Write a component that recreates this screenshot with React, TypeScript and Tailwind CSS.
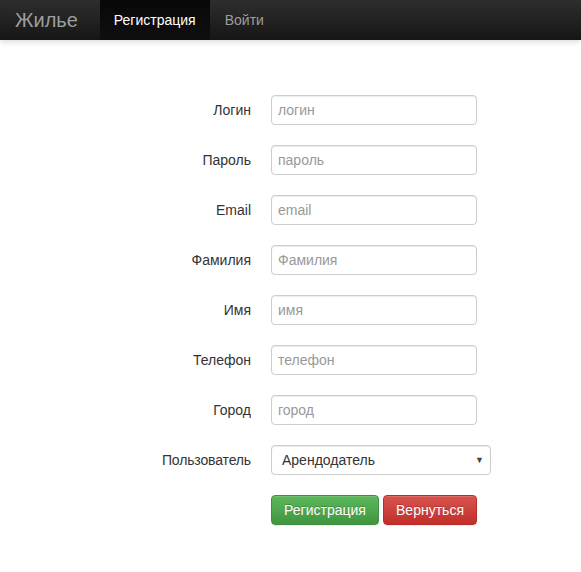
import React from "react";

const fields = [
  { label: "Логин", placeholder: "логин" },
  { label: "Пароль", placeholder: "пароль" },
  { label: "Email", placeholder: "email" },
  { label: "Фамилия", placeholder: "Фамилия" },
  { label: "Имя", placeholder: "имя" },
  { label: "Телефон", placeholder: "телефон" },
  { label: "Город", placeholder: "город" },
];

export default function App() {
  return (
    <div
      className="min-h-[572px] bg-white text-[14px] text-[#333]"
      style={{ fontFamily: '"Liberation Sans", Arial, sans-serif' }}
    >
      {/* Навбар */}
      <nav className="flex h-10 items-stretch bg-gradient-to-b from-[#2e2e2e] to-[#161616] shadow-[0_2px_6px_rgba(0,0,0,0.15)]">
        <div className="flex items-center pl-[15px] pr-[22px] text-[20px] text-[#9d9d9d]">
          Жилье
        </div>
        <div className="flex items-center bg-gradient-to-b from-[#080808] to-[#0f0f0f] px-[14px] text-white">
          Регистрация
        </div>
        <div className="flex items-center px-[15px] text-[#9d9d9d]">Войти</div>
      </nav>

      {/* Форма */}
      <form className="flex flex-col gap-5 pt-[55px]">
        {fields.map((f) => (
          <div key={f.label} className="flex items-center gap-5">
            <label className="w-[251px] text-right">{f.label}</label>
            <input
              placeholder={f.placeholder}
              className="h-[30px] w-[206px] rounded border border-[#ccc] px-[6px] text-[14px] shadow-[inset_0_1px_1px_rgba(0,0,0,0.075)] outline-none placeholder:text-[#999]"
            />
          </div>
        ))}

        <div className="flex items-center gap-5">
          <label className="w-[251px] text-right tracking-[-0.15px]">Пользователь</label>
          <div className="relative flex h-[30px] w-[220px] items-center rounded border border-[#ccc] px-[10px] text-[14px] shadow-[inset_0_1px_1px_rgba(0,0,0,0.075)]">
            Арендодатель
            <span className="absolute right-[6px] top-[8px] text-[9px] text-[#444]">▼</span>
          </div>
        </div>

        <div className="flex items-center gap-1 pl-[271px]">
          <button
            type="button"
            className="h-[30px] w-[108px] rounded border border-[#3e8f3e] bg-gradient-to-b from-[#5cb85c] to-[#419641] text-white [text-shadow:0_-1px_0_rgba(0,0,0,0.2)] shadow-[inset_0_1px_0_rgba(255,255,255,0.15),0_1px_1px_rgba(0,0,0,0.075)]"
          >
            Регистрация
          </button>
          <button
            type="button"
            className="h-[30px] w-[94px] rounded border border-[#b92c28] bg-gradient-to-b from-[#d9534f] to-[#c12e2a] text-white [text-shadow:0_-1px_0_rgba(0,0,0,0.2)] shadow-[inset_0_1px_0_rgba(255,255,255,0.15),0_1px_1px_rgba(0,0,0,0.075)]"
          >
            Вернуться
          </button>
        </div>
      </form>
    </div>
  );
}
